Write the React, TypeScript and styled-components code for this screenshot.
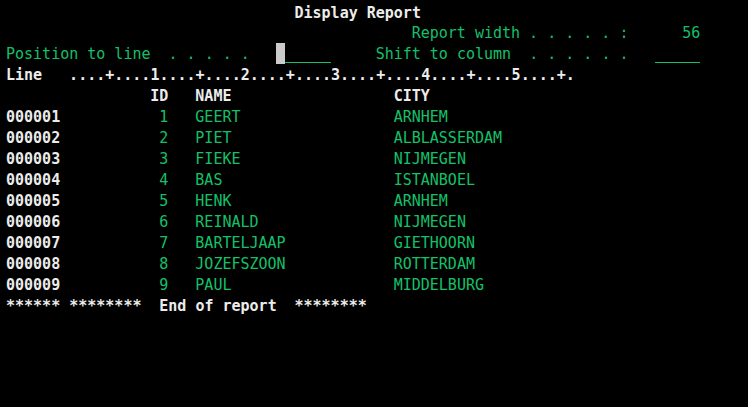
import React from "react";
import styled, { createGlobalStyle, css } from "styled-components";

const GlobalStyle = createGlobalStyle`
  html, body {
    margin: 0;
    padding: 0;
    background: #000;
  }
`;

type Tone = "white" | "green";

interface IRecord {
  id: number;
  name: string;
  city: string;
}

const records: IRecord[] = [
  { id: 1, name: "GEERT", city: "ARNHEM" },
  { id: 2, name: "PIET", city: "ALBLASSERDAM" },
  { id: 3, name: "FIEKE", city: "NIJMEGEN" },
  { id: 4, name: "BAS", city: "ISTANBOEL" },
  { id: 5, name: "HENK", city: "ARNHEM" },
  { id: 6, name: "REINALD", city: "NIJMEGEN" },
  { id: 7, name: "BARTELJAAP", city: "GIETHOORN" },
  { id: 8, name: "JOZEFSZOON", city: "ROTTERDAM" },
  { id: 9, name: "PAUL", city: "MIDDELBURG" },
];

const GREEN = "#14c069";
const WHITE = "#ececec";

const Screen = styled.div`
  width: 748px;
  height: 407px;
  box-sizing: border-box;
  padding: 2.5px 0 0 6px;
  background: #000;
  font-family: "DejaVu Sans Mono", "Liberation Mono", monospace;
  font-size: 15px;
  overflow: hidden;
`;

const Line = styled.div`
  display: grid;
  grid-template-columns: repeat(82, 1ch);
  height: 20.95px;
  line-height: 20.95px;
`;

const Text = styled.span<{ $col: number; $len: number; $tone: Tone }>`
  grid-column: ${(p) => p.$col + 1} / span ${(p) => p.$len};
  white-space: pre;
  ${(p) =>
    p.$tone === "white"
      ? css`
          color: ${WHITE};
          font-weight: bold;
        `
      : css`
          color: ${GREEN};
          font-weight: normal;
        `}
`;

const Cursor = styled.span<{ $col: number }>`
  grid-column: ${(p) => p.$col + 1} / span 1;
  align-self: start;
  margin-top: -1.5px;
  height: 20.7px;
  background: #cbcbcb;
`;

const InputField = styled.span<{ $col: number; $len: number }>`
  grid-column: ${(p) => p.$col + 1} / span ${(p) => p.$len};
  align-self: start;
  height: 18px;
  border-bottom: 1px solid ${GREEN};
`;

const Cell = ({
  col,
  tone = "green",
  children,
}: {
  col: number;
  tone?: Tone;
  children: string;
}) => (
  <Text $col={col} $len={children.length} $tone={tone}>
    {children}
  </Text>
);

const RULER = "....+....1....+....2....+....3....+....4....+....5....+.";

const App = () => {
  return (
    <>
      <GlobalStyle />
      <Screen>
        <Line>
          <Cell col={32} tone="white">Display Report</Cell>
        </Line>
        <Line>
          <Cell col={45}>{"Report width . . . . . :"}</Cell>
          <Cell col={75}>56</Cell>
        </Line>
        <Line>
          <Cell col={0}>{"Position to line  . . . . ."}</Cell>
          <Cursor $col={30} />
          <InputField $col={31} $len={5} />
          <Cell col={41}>{"Shift to column  . . . . . ."}</Cell>
          <InputField $col={72} $len={5} />
        </Line>
        <Line>
          <Cell col={0} tone="white">Line</Cell>
          <Cell col={7} tone="white">{RULER}</Cell>
        </Line>
        <Line>
          <Cell col={16} tone="white">ID</Cell>
          <Cell col={21} tone="white">NAME</Cell>
          <Cell col={43} tone="white">CITY</Cell>
        </Line>
        {records.map((r) => (
          <Line key={r.id}>
            <Cell col={0} tone="white">{String(r.id).padStart(6, "0")}</Cell>
            <Cell col={17}>{String(r.id)}</Cell>
            <Cell col={21}>{r.name}</Cell>
            <Cell col={43}>{r.city}</Cell>
          </Line>
        ))}
        <Line>
          <Cell col={0} tone="white">{"****** ********"}</Cell>
          <Cell col={17} tone="white">End of report</Cell>
          <Cell col={32} tone="white">********</Cell>
        </Line>
      </Screen>
    </>
  );
};

export default App;
